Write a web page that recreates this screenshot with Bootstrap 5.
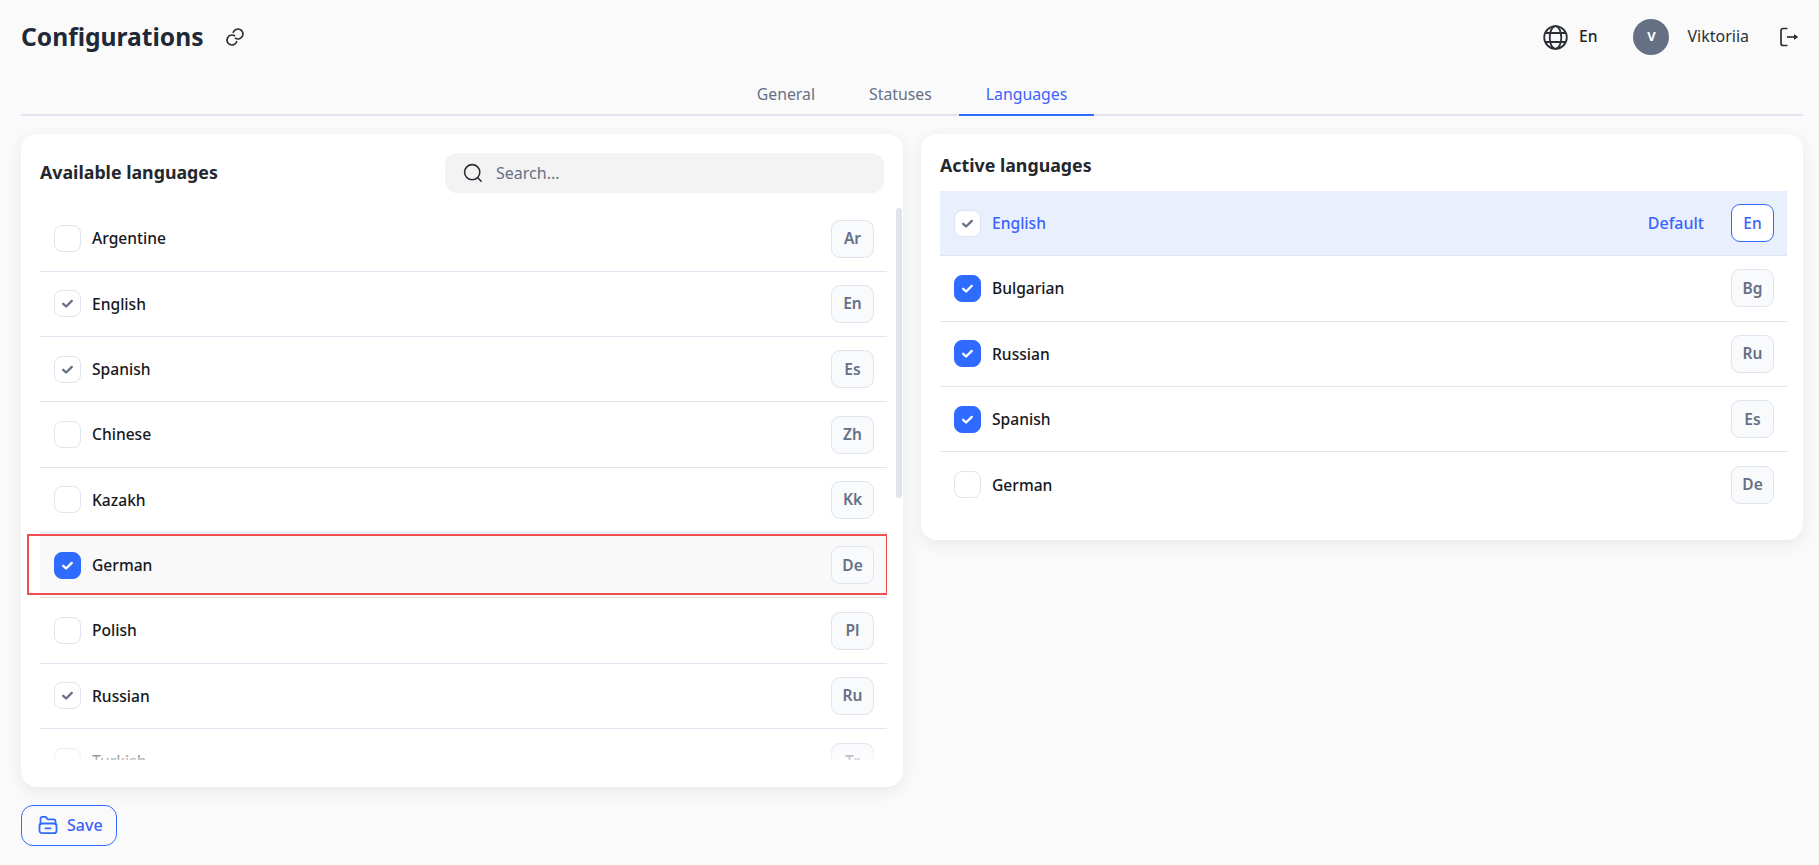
<!DOCTYPE html>
<html lang="en">
<head>
<meta charset="UTF-8" />
<title>Configurations</title>
<link href="https://cdn.jsdelivr.net/npm/bootstrap@5.3.3/dist/css/bootstrap.min.css" rel="stylesheet" />
<style>
  body { background: #fafafa; font-family: "Noto Sans", sans-serif; font-size: 16px; color: #1f2328; height: 865px; overflow: hidden; }
  .page-wrap { padding: 14px 16px 0 21px; }
  .top-bar { height: 46px; }
  .page-title { font-size: 24.6px; font-weight: 700; line-height: 36px; color: #1f2937; margin: 0; }
  .title-link { margin-left: 21px; width: 20px; height: 20px; color: #2b2f36; }
  .top-icon { color: #2b2f36; }
  .lang-code { font-weight: 500; margin-left: 11px; font-size: 15.6px; }
  .user-avatar { width: 36px; height: 36px; background: #667085; color: #fff; font-size: 13px; font-weight: 700; margin-left: 36px; }
  .user-name { margin-left: 18px; margin-right: 30px; font-size: 16px; color: #2b2f36; position: relative; top: -1px; }
  .logout-icon { margin-right: 4px; }
  .tabs-row { margin-top: 12px; border-bottom: 2px solid #e0e4ee; height: 44px; }
  .tabs-row .nav-link { padding: 10px 27px 0; height: 44px; color: #667085; border-bottom: 2px solid transparent; line-height: 24px; font-size: 15.8px; }
  .tabs-row .nav-link.active { color: #3b63fb; border-bottom-color: #2f6bff; }
  .cards-row { margin-top: 18px; gap: 18px; align-items: flex-start; }
  .lang-card { flex: 1 1 0; border: 0; border-radius: 16px; background: #fff; box-shadow: 0 4px 16px rgba(30, 50, 90, .09); padding: 19px 16px 0 19px; position: relative; }
  .lang-card.right-card { padding-bottom: 22px; }
  .card-head { font-size: 17.8px; font-weight: 700; line-height: 24px; color: #23272e; margin: 0; }
  .head-left .card-head { position: relative; top: -1px; }
  .active-head { margin-bottom: 14px; }
  .search-box { width: 439px; height: 40px; margin-right: 3px; background: #f3f3f3; border-radius: 12px; padding-left: 18px; color: #667085; }
  .search-box input { border: 0; background: transparent; outline: 0; margin-left: 13px; font-size: 16px; width: 380px; padding: 0; }
  .search-box input::placeholder { color: #667085; opacity: 1; }
  .list-clip { position: relative; height: 553.6px; overflow: hidden; margin: 13.4px 0 27px -19px; padding-left: 19px; }
  .list-clip::after { content: ""; position: absolute; left: 0; right: 0; bottom: 0; height: 16px; background: linear-gradient(rgba(255,255,255,0), rgba(255,255,255,.75)); }
  .list-scroll-thumb { position: absolute; left: 875px; top: 74px; width: 6px; height: 290px; background: #dfe3ee; border-radius: 3px; }
  .lang-list { margin: 0; }
  .lang-list .list-group-item { height: 65.33px; padding: 0 13px 0 14px; border-width: 0 0 1px; border-color: #e0e4ee; display: flex; align-items: center; background: transparent; color: #16181d; font-weight: 500; font-size: 15.6px; border-radius: 0; }
  .lang-list .list-group-item:last-child { border-bottom: 0; }
  .lang-list .row-hover { background: #f9f9f9; position: relative; overflow: visible; }
  .lang-list .row-default { background: #e9effd; color: #3b63fb; }
  .lang-name { padding-top: 1px; }
  .tick-box { width: 27px; height: 27px; border: 1px solid #e0e4ee; border-radius: 8px; background: #fff; color: #667085; margin-right: 11px; flex-shrink: 0; display: flex; align-items: center; justify-content: center; }
  .tick-box.is-on { background: #2f6bff; border-color: #2f6bff; color: #fff; }
  .code-chip { width: 43px; height: 38px; border: 1px solid #e0e4ee; border-radius: 9px; background: #f9fafc; color: #667085; font-weight: 600; font-size: 15.5px; display: flex; align-items: center; justify-content: center; margin-left: auto; }
  .row-default .code-chip { background: #fff; border-color: #2f6bff; color: #3b63fb; font-weight: 500; }
  .default-tag { margin-left: auto; margin-right: 27px; font-weight: 500; font-size: 16px; }
  .row-default .default-tag + .code-chip { margin-left: 0; }
  .red-frame { position: absolute; left: -13px; right: -1px; top: 1px; bottom: 2px; border: 2px solid #f04f4f; pointer-events: none; }
  .save-btn { margin-top: 18px; width: 96px; height: 41px; border: 1px solid #2f6bff; border-radius: 12px; color: #3b63fb; background: transparent; font-weight: 500; font-size: 16px; padding: 0 0 0 16px; gap: 9px; }
  .save-btn svg { color: #2f6bff; }
  .save-btn:hover { color: #3b63fb; border-color: #2f6bff; }
</style>
</head>
<body>
<div class="page-wrap">
  <header class="top-bar d-flex align-items-center">
    <h1 class="page-title">Configurations</h1>
    <svg class="title-link" viewBox="0 0 20 20" fill="none" stroke="currentColor" stroke-width="1.7" stroke-linecap="round"><path d="M8.3 5.3A5 5 0 1 1 10.5 11.33"/><path d="M11.7 14.7A5 5 0 1 1 9.5 8.67"/></svg>
    <div class="ms-auto d-flex align-items-center">
      <svg class="top-icon" width="25" height="25" viewBox="0 0 25 25" fill="none" stroke="currentColor" stroke-width="1.8"><circle cx="12.5" cy="12.5" r="11.3"/><ellipse cx="12.5" cy="12.5" rx="5.8" ry="11.3"/><path d="M2.4 8h20.2M2.4 17h20.2"/></svg>
      <span class="lang-code">En</span>
      <span class="user-avatar rounded-circle d-flex align-items-center justify-content-center">V</span>
      <span class="user-name">Viktoriia</span>
      <svg class="top-icon logout-icon" width="20" height="20" viewBox="0 0 20 20" fill="none" stroke="currentColor" stroke-width="1.7" stroke-linejoin="round"><path d="M8.5 1.5H4a2 2 0 0 0-2 2v13a2 2 0 0 0 2 2h4.5"/><path d="M8 10h8"/><path d="M15.5 7.8l3 2.2-3 2.2z" fill="currentColor" stroke-width="1"/></svg>
    </div>
  </header>

  <nav class="nav tabs-row justify-content-center">
    <a class="nav-link" href="#">General</a>
    <a class="nav-link" href="#">Statuses</a>
    <a class="nav-link active" href="#">Languages</a>
  </nav>

  <div class="d-flex cards-row">
    <section class="card lang-card">
      <div class="head-left d-flex align-items-center justify-content-between">
        <h2 class="card-head">Available languages</h2>
        <label class="search-box d-flex align-items-center mb-0">
          <svg width="20" height="20" viewBox="0 0 20 20" fill="none" stroke="#2b2f36" stroke-width="1.6" stroke-linecap="round"><circle cx="9.2" cy="9.2" r="7.6"/><path d="M15 15l3.2 3.2"/></svg>
          <input type="text" placeholder="Search..." />
        </label>
      </div>
      <div class="list-clip">
        <ul class="list-group list-group-flush lang-list" id="availableList"></ul>
      </div>
      <div class="list-scroll-thumb"></div>
    </section>

    <section class="card lang-card right-card">
      <h2 class="card-head active-head">Active languages</h2>
      <ul class="list-group list-group-flush lang-list" id="activeList"></ul>
    </section>
  </div>

  <button class="btn save-btn d-flex align-items-center" type="button">
    <svg width="20" height="20" viewBox="0 0 20 20" fill="none" stroke="currentColor" stroke-width="1.8" stroke-linecap="round" stroke-linejoin="round"><path d="M2.5 9V3.8a2 2 0 0 1 2-2h3.2l2.2 2.6h5.6a2 2 0 0 1 2 2V9"/><rect x="1.5" y="8.5" width="17" height="9.7" rx="2.5"/><path d="M7.5 13.4h5"/></svg>
    Save
  </button>
</div>

<script>
  var tick = '<svg width="13" height="11" viewBox="0 0 13 11" fill="none" stroke="currentColor" stroke-width="2.3" stroke-linecap="round" stroke-linejoin="round"><path d="M2.2 5.8l2.9 2.7 5.7-5.6"/></svg>';

  function rowHtml(item) {
    var box = '<span class="tick-box' + (item.state === "on" ? " is-on" : "") + '">' + (item.state ? tick : "") + "</span>";
    var cls = "list-group-item" + (item.cls ? " " + item.cls : "");
    var tag = item.tag ? '<span class="default-tag">' + item.tag + "</span>" : "";
    var frame = item.framed ? '<span class="red-frame"></span>' : "";
    return '<li class="' + cls + '">' + box + '<span class="lang-name">' + item.name + "</span>" + tag + '<span class="code-chip">' + item.code + "</span>" + frame + "</li>";
  }

  var available = [
    { name: "Argentine", code: "Ar" },
    { name: "English", code: "En", state: "muted" },
    { name: "Spanish", code: "Es", state: "muted" },
    { name: "Chinese", code: "Zh" },
    { name: "Kazakh", code: "Kk" },
    { name: "German", code: "De", state: "on", cls: "row-hover", framed: true },
    { name: "Polish", code: "Pl" },
    { name: "Russian", code: "Ru", state: "muted" },
    { name: "Turkish", code: "Tr" }
  ];
  var active = [
    { name: "English", code: "En", state: "muted", cls: "row-default", tag: "Default" },
    { name: "Bulgarian", code: "Bg", state: "on" },
    { name: "Russian", code: "Ru", state: "on" },
    { name: "Spanish", code: "Es", state: "on" },
    { name: "German", code: "De" }
  ];

  document.getElementById("availableList").innerHTML = available.map(rowHtml).join("");
  document.getElementById("activeList").innerHTML = active.map(rowHtml).join("");
</script>
</body>
</html>
